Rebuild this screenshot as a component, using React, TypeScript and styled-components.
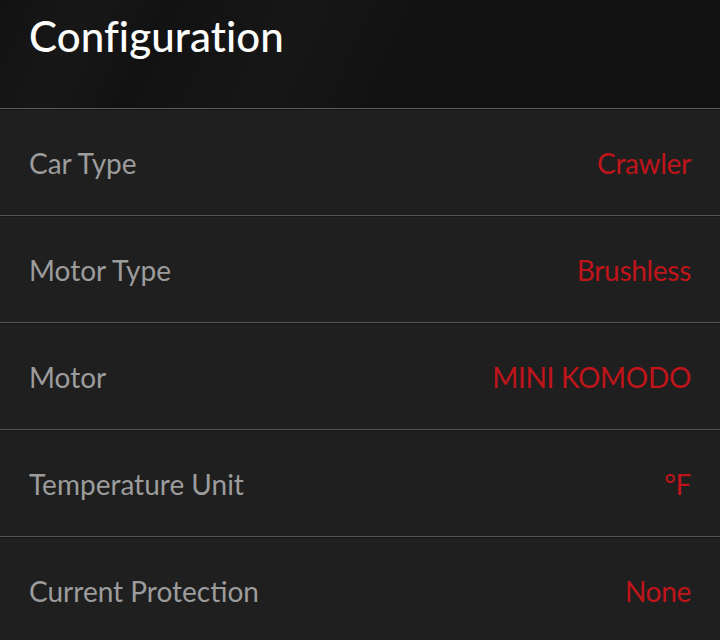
import React from "react";
import styled, { createGlobalStyle } from "styled-components";

const Global = createGlobalStyle`
  html, body { margin: 0; padding: 0; background: #1f1f1f; }
  body { font-family: Lato, "Open Sans", sans-serif; }
`;

const Screen = styled.div`
  width: 720px;
  height: 640px;
  overflow: hidden;
  display: flex;
  flex-direction: column;
  background: #1f1f1f;
`;

const Header = styled.header`
  height: 109px;
  flex: none;
  box-sizing: border-box;
  padding: 12px 29px 0;
  background:
    linear-gradient(115deg, rgba(255,255,255,0) 0%, rgba(255,255,255,0.025) 12%, rgba(255,255,255,0) 22%, rgba(255,255,255,0.02) 40%, rgba(255,255,255,0) 55%),
    #121212;
  border-bottom: 1px solid #5a5a5a;
`;

const Title = styled.h1`
  margin: 0;
  font-family: Lato, "Open Sans", sans-serif;
  font-weight: 500;
  font-size: 42px;
  line-height: 48px;
  color: #ffffff;
  letter-spacing: 0.1px;
`;

const List = styled.div`
  display: flex;
  flex-direction: column;
`;

const Row = styled.div`
  flex: none;
  height: 107px;
  box-sizing: border-box;
  display: flex;
  align-items: center;
  justify-content: space-between;
  padding: 1px 29px 0;
  background: #1f1f1f;
  border-top: 1px solid #151515;
  border-bottom: 1px solid #555555;
`;

const Label = styled.span`
  font-family: Lato, "Open Sans", sans-serif;
  font-size: 28px;
  color: #9c9c9c;
`;

const Value = styled.span`
  font-family: Lato, "Open Sans", sans-serif;
  font-size: 28px;
  color: #c0141b;
  letter-spacing: -0.3px;
`;

const items: [string, string][] = [
  ["Car Type", "Crawler"],
  ["Motor Type", "Brushless"],
  ["Motor", "MINI KOMODO"],
  ["Temperature Unit", "°F"],
  ["Current Protection", "None"],
];

export default function App() {
  return (
    <Screen>
      <Global />
      <Header>
        <Title>Configuration</Title>
      </Header>
      <List>
        {items.map(([k, v]) => (
          <Row key={k}>
            <Label>{k}</Label>
            <Value>{v}</Value>
          </Row>
        ))}
      </List>
    </Screen>
  );
}
